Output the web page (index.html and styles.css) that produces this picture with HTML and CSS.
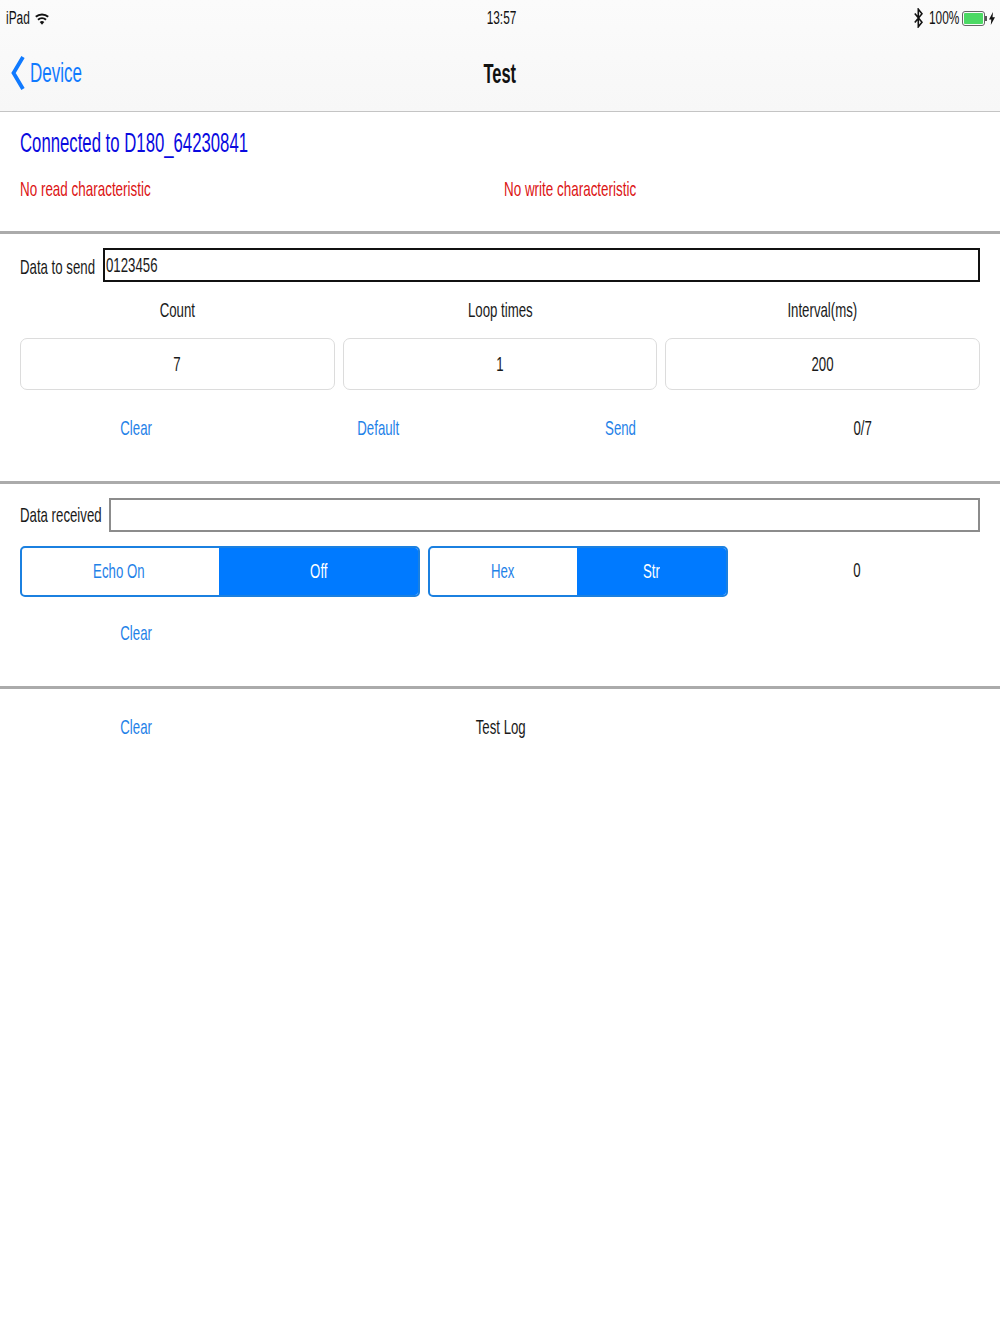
FILE: index.html
```html
<!DOCTYPE html>
<html lang="en">
<head>
<meta charset="utf-8">
<title>Test</title>
<link rel="stylesheet" href="styles.css">
</head>
<body>
<header class="bar">
  <div class="status">
    <div class="status-left">
      <span class="sq sq-l t-status">iPad</span>
      <svg class="wifi" viewBox="0 0 14 13" width="14" height="13"><path d="M7 12.800 4.700 10a3.400 3.400 0 0 1 4.600 0Z" fill="#111"/><path d="M3 7.800a6 6 0 0 1 8 0M.8 4.800a9.400 9.400 0 0 1 12.400 0" fill="none" stroke="#111" stroke-width="2"/></svg>
    </div>
    <span class="sq t-status t-clock">13:57</span>
    <div class="status-right">
      <svg class="bt" viewBox="0 0 9 20" width="9" height="20"><path d="M.8 5.500 8 14.300 4.300 18.800V1.200L8 5.700.8 14.500" fill="none" stroke="#111" stroke-width="1.600"/></svg>
      <span class="sq sq-l t-status t-pct">100%</span>
      <div class="batt"><div class="batt-fill"></div></div>
      <div class="batt-tip"></div>
      <svg class="bolt" viewBox="0 0 6 13" width="6" height="13"><path d="M4 0 0 7.500h2.300L1.800 13 6 5.300H3.500Z" fill="#111"/></svg>
    </div>
  </div>
  <nav class="nav">
    <a class="back">
      <svg class="chev" viewBox="0 0 14 36" width="14" height="36"><path d="M12 2 2.500 18 12 34" fill="none" stroke="#107aff" stroke-width="3.800"/></svg>
      <span class="sq sq-l t-nav">Device</span>
    </a>
    <span class="sq t-title">Test</span>
  </nav>
</header>

<section class="conn">
  <div class="conn-line"><span class="sq sq-l t-conn">Connected to D180_64230841</span></div>
  <div class="chars">
    <span class="sq sq-l t-warn">No read characteristic</span>
    <span class="sq sq-l t-warn">No write characteristic</span>
  </div>
</section>

<section class="send">
  <div class="input-row send-row">
    <span class="sq sq-l t-body">Data to send</span>
    <div class="input input-dark"><span class="sq sq-l t-body">0123456</span></div>
  </div>
  <div class="cols labels">
    <span class="sq t-body">Count</span>
    <span class="sq t-body">Loop times</span>
    <span class="sq t-body">Interval(ms)</span>
  </div>
  <div class="cols fields">
    <div class="field"><span class="sq t-body">7</span></div>
    <div class="field"><span class="sq t-body">1</span></div>
    <div class="field"><span class="sq t-body">200</span></div>
  </div>
  <div class="actions">
    <span class="sq t-link">Clear</span>
    <span class="sq t-link">Default</span>
    <span class="sq t-link">Send</span>
    <span class="sq t-body">0/7</span>
  </div>
</section>

<section class="recv">
  <div class="input-row recv-row">
    <span class="sq sq-l t-body">Data received</span>
    <div class="input input-grey"></div>
  </div>
  <div class="seg-row">
    <div class="seg seg-echo">
      <div class="seg-off"><span class="sq t-link">Echo On</span></div>
      <div class="seg-on"><span class="sq t-on">Off</span></div>
    </div>
    <div class="seg seg-fmt">
      <div class="seg-off"><span class="sq t-link">Hex</span></div>
      <div class="seg-on"><span class="sq t-on">Str</span></div>
    </div>
    <span class="sq t-body seg-count">0</span>
  </div>
  <div class="actions recv-actions"><span class="sq t-link">Clear</span></div>
</section>

<section class="log">
  <span class="sq t-link">Clear</span>
  <span class="sq t-body">Test Log</span>
</section>
</body>
</html>
```
FILE: styles.css
```css
* { box-sizing: border-box; }
html, body { margin: 0; padding: 0; }
body { width: 1000px; height: 1334px; background: #fff; overflow: hidden; font-family: "Liberation Sans", Arial, sans-serif; color: #1a1a1a; }

.sq { display: inline-block; white-space: nowrap; transform: scaleX(.63); transform-origin: center; }
.sq-l { transform-origin: left center; }

.t-status { font-size: 18px; line-height: 20px; color: #111; transform: scaleX(.66); }
.t-nav { font-size: 27px; line-height: 32px; color: #107aff; }
.t-title { font-size: 27px; line-height: 32px; font-weight: 700; color: #111; transform: scaleX(.61); }
.t-conn { font-size: 27px; line-height: 32px; color: #0a0ae0; transform: scaleX(.62); }
.t-warn { font-size: 21px; line-height: 26px; color: #dc1414; transform: scaleX(.64); }
.t-body { font-size: 21px; line-height: 26px; color: #1a1a1a; }
.t-link { font-size: 21px; line-height: 26px; color: #1f82e8; }
.t-on { font-size: 21px; line-height: 26px; color: #fff; }

.bar { height: 112px; background: linear-gradient(#fbfbfb, #f7f7f7); border-bottom: 1px solid #c4c4c4; }
.status { height: 36px; display: grid; grid-template-columns: 1fr auto 1fr; align-items: center; }
.status-left { display: flex; align-items: center; gap: 4px; padding-left: 6px; width: 200px; }
.status-left .sq { width: 25px; }
.t-clock { margin-left: 4px; }
.status-right { display: flex; align-items: center; justify-content: flex-end; padding-right: 5px; }
.t-pct { width: 30px; margin-left: 6px; margin-right: 3px; flex: none; }
.batt { width: 23px; height: 15px; border: 1px solid #666; border-radius: 3px; padding: 1px; }
.batt-fill { height: 100%; background: #4cd964; border-radius: 1px; }
.batt-tip { width: 2px; height: 5px; background: #555; margin-right: 2px; }
.nav { height: 75px; position: relative; display: flex; align-items: center; justify-content: center; }
.back { position: absolute; left: 11px; top: 19px; display: flex; align-items: center; gap: 5px; }
.chev { display: block; }

.conn { height: 122px; padding: 15px 20px 0; border-bottom: 3px solid #ababab; }
.conn-line { height: 32px; }
.chars { display: grid; grid-template-columns: 484px 1fr; margin-top: 17px; }

.send { height: 250px; padding-top: 14px; border-bottom: 3px solid #ababab; }
.input-row { display: flex; align-items: center; padding: 0 20px; }
.send-row { height: 34px; }
.recv-row { height: 34px; }
.send-row > .sq { width: 83px; flex: none; margin-top: 3px; }
.recv-row > .sq { width: 89px; flex: none; }
.input { flex: 1; height: 34px; display: flex; align-items: center; padding-left: 1px; background: #fff; }
.input-dark { border: 2px solid #111; }
.input-grey { border: 2px solid #8c8c8c; }
.input .sq { width: 60px; }

.cols { display: grid; grid-template-columns: repeat(3, 1fr); gap: 8px; padding: 0 20px; }
.cols > * { text-align: center; }
.labels { margin-top: 15px; height: 26px; }
.fields { margin-top: 15px; }
.field { height: 52px; border: 1px solid #dcdcdc; border-radius: 7px; display: flex; align-items: center; justify-content: center; background: #fff; }

.actions { display: grid; grid-template-columns: repeat(4, 242px); padding-left: 15.5px; margin-top: 25px; height: 26px; justify-items: center; }

.recv { height: 205px; padding-top: 14px; border-bottom: 3px solid #ababab; }
.seg-row { display: flex; align-items: center; padding-left: 20px; margin-top: 14px; height: 51px; }
.seg { display: flex; height: 51px; border: 2px solid #1b80e0; border-radius: 5px; overflow: hidden; background: #fff; }
.seg-echo { width: 400px; }
.seg-echo .seg-off { flex: 0 0 197px; padding-right: 3px; }
.seg-fmt { width: 300px; margin-left: 8px; }
.seg-fmt .seg-off { flex: 0 0 147px; padding-right: 2px; }
.seg-off, .seg-on { display: flex; align-items: center; justify-content: center; padding-bottom: 2px; }
.seg-on { flex: 1; background: #007aff; }
.seg-count { margin-left: 123px; margin-bottom: 4px; }
.recv-actions { margin-top: 23px; }

.log { display: grid; grid-template-columns: 242px 486px; padding-left: 15.5px; padding-top: 25px; justify-items: center; }
```
